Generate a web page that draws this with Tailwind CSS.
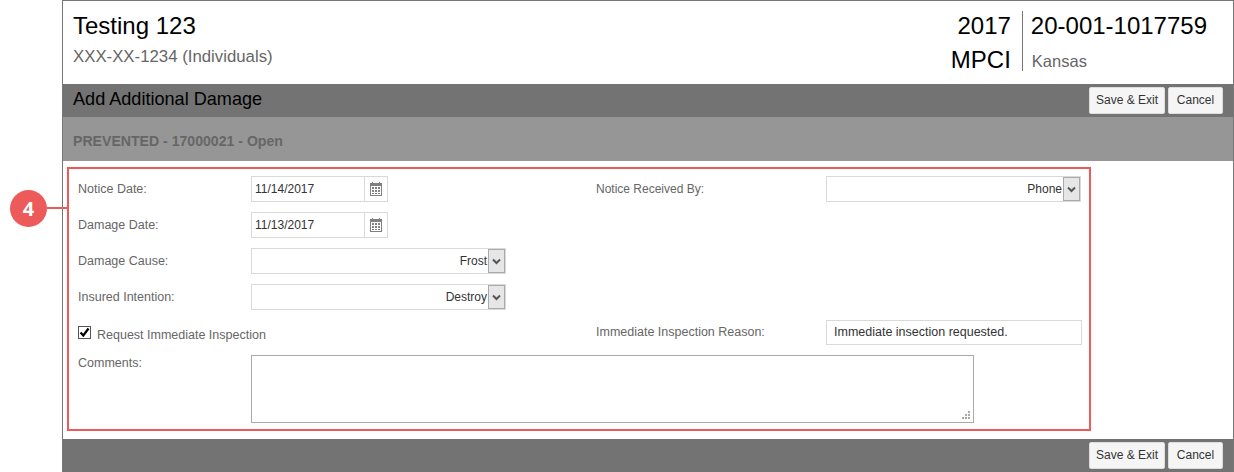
<!DOCTYPE html>
<html>
<head>
<meta charset="utf-8">
<script src="https://cdn.jsdelivr.net/npm/@tailwindcss/browser@4"></script>
</head>
<body class="bg-white font-['Liberation_Sans',Arial,sans-serif] overflow-hidden">
<div class="relative w-[1234px] h-[472px] overflow-hidden pl-[62px]">
  <div class="w-[1172px] h-[472px] border-x border-t border-[#777777] flex flex-col">
    <header class="h-[83px] shrink-0 flex justify-between">
      <div class="pl-[10px] pt-[10px]">
        <h1 class="text-[24px] leading-[30px] text-black">Testing 123</h1>
        <p class="text-[16.8px] leading-[20px] mt-[6px] text-[#666666]">XXX-XX-1234 (Individuals)</p>
      </div>
      <div class="flex pt-[10px] pr-[26px]">
        <div class="text-right text-[24px] text-black leading-[30px] pr-[11px] border-r border-[#777777] h-[60px]">
          <div>2017</div>
          <div class="mt-[4px]">MPCI</div>
        </div>
        <div class="pl-[8px]">
          <div class="text-[24px] leading-[30px] text-black">20-001-1017759</div>
          <div class="text-[16.5px] leading-[20px] mt-[10px] ml-[1px] text-[#666666]">Kansas</div>
        </div>
      </div>
    </header>
    <div class="h-[33px] shrink-0 bg-[#737373] flex items-center justify-between pl-[10px] pr-[10px]">
      <h2 class="text-[18.1px] text-black -mt-[1px]">Add Additional Damage</h2>
      <div class="flex gap-[3px]">
        <button class="h-[27px] w-[76px] bg-[#f5f5f5] border border-[#dddddd] rounded-[2px] text-[12px] text-[#333333] -mt-[1px]">Save &amp; Exit</button>
        <button class="h-[27px] w-[55px] bg-[#f5f5f5] border border-[#dddddd] rounded-[2px] text-[12px] text-[#333333] -mt-[1px]">Cancel</button>
      </div>
    </div>
    <div class="h-[44px] shrink-0 bg-[#969696] flex items-center pl-[10px] pt-[5px] text-[14.1px] font-bold text-[#666666]">PREVENTED - 17000021 - Open</div>
    <div class="flex-1 pl-[4px] pt-[6px]">
      <section class="w-[1024px] h-[264px] border-2 border-[#ed5a5a] pl-[9px] pt-[7px] text-[12.5px] text-[#666666]">
        <div class="flex h-[26px] items-center">
          <div class="w-[518px] flex items-center">
            <label class="w-[173px]">Notice Date:</label>
            <div class="w-[137px] h-[26px] border border-[#d9d9d9] flex items-center text-[12px] text-[#333333]">
              <span class="w-[113px] h-full pl-[3px] flex items-center border-r border-[#d9d9d9]">11/14/2017</span>
              <span class="flex-1 flex justify-center">
                <svg width="12" height="14" viewBox="0 0 12 14"><path fill="#808080" d="M2 0h1v1h6V0h1v1h2v13H0V1h2z"/><path fill="#ffffff" d="M1 4h10v9H1z"/><path fill="#808080" d="M2 5h2v2H2zM5 5h2v2H5zM8 5h2v2H8zM2 8h2v2H2zM5 8h2v2H5zM8 8h2v2H8zM2 11h2v1H2zM5 11h2v1H5zM8 11h2v1H8z"/></svg>
              </span>
            </div>
          </div>
          <label class="w-[230px] text-[12px]">Notice Received By:</label>
          <div class="w-[255px] h-[26px] border border-[#d9d9d9] flex items-center justify-end text-[12px] text-[#333333]">
            <span>Phone</span>
            <span class="w-[17px] h-[24px] ml-[1px] border border-[#aaaaaa] bg-[#e6e6e6] flex items-center justify-center shrink-0"><svg width="9" height="7" viewBox="0 0 9 7"><path d="M1 1.5l3.5 3.5L8 1.5" fill="none" stroke="#555555" stroke-width="2"/></svg></span>
          </div>
        </div>
        <div class="flex h-[26px] items-center mt-[10px]">
          <label class="w-[173px]">Damage Date:</label>
          <div class="w-[137px] h-[26px] border border-[#d9d9d9] flex items-center text-[12px] text-[#333333]">
            <span class="w-[113px] h-full pl-[3px] flex items-center border-r border-[#d9d9d9]">11/13/2017</span>
            <span class="flex-1 flex justify-center">
              <svg width="12" height="14" viewBox="0 0 12 14"><path fill="#808080" d="M2 0h1v1h6V0h1v1h2v13H0V1h2z"/><path fill="#ffffff" d="M1 4h10v9H1z"/><path fill="#808080" d="M2 5h2v2H2zM5 5h2v2H5zM8 5h2v2H8zM2 8h2v2H2zM5 8h2v2H5zM8 8h2v2H8zM2 11h2v1H2zM5 11h2v1H5zM8 11h2v1H8z"/></svg>
            </span>
          </div>
        </div>
        <div class="flex h-[26px] items-center mt-[10px]">
          <label class="w-[173px]">Damage Cause:</label>
          <div class="w-[255px] h-[26px] border border-[#d9d9d9] flex items-center justify-end text-[12px] text-[#333333]">
            <span class="mr-[1px]">Frost</span>
            <span class="w-[17px] h-[24px] border border-[#aaaaaa] bg-[#e6e6e6] flex items-center justify-center shrink-0"><svg width="9" height="7" viewBox="0 0 9 7"><path d="M1 1.5l3.5 3.5L8 1.5" fill="none" stroke="#555555" stroke-width="2"/></svg></span>
          </div>
        </div>
        <div class="flex h-[26px] items-center mt-[10px]">
          <label class="w-[173px]">Insured Intention:</label>
          <div class="w-[255px] h-[26px] border border-[#d9d9d9] flex items-center justify-end text-[12px] text-[#333333]">
            <span class="mr-[1px]">Destroy</span>
            <span class="w-[17px] h-[24px] border border-[#aaaaaa] bg-[#e6e6e6] flex items-center justify-center shrink-0"><svg width="9" height="7" viewBox="0 0 9 7"><path d="M1 1.5l3.5 3.5L8 1.5" fill="none" stroke="#555555" stroke-width="2"/></svg></span>
          </div>
        </div>
        <div class="flex h-[26px] items-center mt-[10px]">
          <div class="w-[518px] flex items-center">
            <span class="w-[13px] h-[13px] border border-[#555555] bg-white flex items-center justify-center -mt-[1px]"><svg width="11" height="11" viewBox="0 0 11 11"><path d="M1.5 5.5l2.8 3L9.5 1.5" fill="none" stroke="#000000" stroke-width="2.2"/></svg></span>
            <label class="ml-[6px] mt-[5px]">Request Immediate Inspection</label>
          </div>
          <label class="w-[230px] mb-[2px]">Immediate Inspection Reason:</label>
          <div class="self-start w-[256px] h-[25px] border border-[#d9d9d9] flex items-center pl-[7px] pb-[1px] text-[#333333]">Immediate insection requested.</div>
        </div>
        <div class="flex mt-[9px]">
          <label class="w-[173px] leading-[14px] pt-[1px]">Comments:</label>
          <div class="relative w-[723px] h-[68px] border border-[#aaaaaa] bg-white">
            <svg class="absolute right-[3px] bottom-[3px]" width="8" height="8" viewBox="0 0 8 8"><path fill="#aaaaaa" d="M6 0h2v2H6zM3 3h2v2H3zM6 3h2v2H6zM0 6h2v2H0zM3 6h2v2H3zM6 6h2v2H6z"/></svg>
          </div>
        </div>
      </section>
    </div>
    <div class="h-[33px] shrink-0 bg-[#737373] flex items-center justify-end pr-[10px]">
      <div class="flex gap-[3px] -mt-[1px]">
        <button class="h-[27px] w-[76px] bg-[#f5f5f5] border border-[#dddddd] rounded-[2px] text-[12px] text-[#333333]">Save &amp; Exit</button>
        <button class="h-[27px] w-[55px] bg-[#f5f5f5] border border-[#dddddd] rounded-[2px] text-[12px] text-[#333333]">Cancel</button>
      </div>
    </div>
  </div>
  <div class="absolute left-[10px] top-[190px] w-[37px] h-[37px] rounded-full bg-[#ed5a5a] flex items-center justify-center text-white font-bold text-[20px] font-['Open_Sans',sans-serif]">4</div>
  <div class="absolute left-[47px] top-[207px] w-[20px] h-[2px] bg-[#ed5a5a]"></div>
</div>
</body>
</html>
